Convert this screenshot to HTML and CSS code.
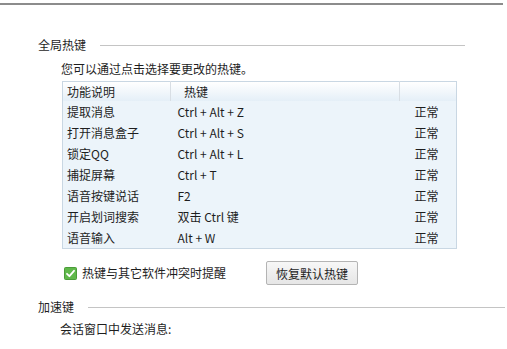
FILE: index.html
```html
<!DOCTYPE html>
<html lang="zh-CN">
<head>
<meta charset="utf-8">
<link rel="stylesheet" href="styles.css">
</head>
<body>
<div class="topline"></div>
<div class="group first">
  <div class="group-title"><span>全局热键</span><i class="rule rule-a"></i></div>
  <p class="hint">您可以通过点击选择要更改的热键。</p>
  <table class="keys">
    <colgroup><col class="w1"><col class="w2"><col class="w3"></colgroup>
    <thead>
      <tr><th class="c1">功能说明</th><th class="c2">热键</th><th class="c3"></th></tr>
    </thead>
    <tbody>
      <tr><td class="c1">提取消息</td><td class="c2">Ctrl + Alt + Z</td><td class="c3">正常</td></tr>
      <tr><td class="c1">打开消息盒子</td><td class="c2">Ctrl + Alt + S</td><td class="c3">正常</td></tr>
      <tr><td class="c1">锁定QQ</td><td class="c2">Ctrl + Alt + L</td><td class="c3">正常</td></tr>
      <tr><td class="c1">捕捉屏幕</td><td class="c2">Ctrl + T</td><td class="c3">正常</td></tr>
      <tr><td class="c1">语音按键说话</td><td class="c2">F2</td><td class="c3">正常</td></tr>
      <tr><td class="c1">开启划词搜索</td><td class="c2">双击 Ctrl 键</td><td class="c3">正常</td></tr>
      <tr><td class="c1">语音输入</td><td class="c2">Alt + W</td><td class="c3">正常</td></tr>
    </tbody>
  </table>
  <div class="options">
    <label class="check">
      <svg width="13" height="13" viewBox="0 0 13 13"><rect x="0.5" y="0.5" width="12" height="12" rx="1" fill="#5fb84a" stroke="#4a9c39"/><path d="M3 6.8 L5.4 9.2 L10 3.8" fill="none" stroke="#fff" stroke-width="1.8" stroke-linecap="round" stroke-linejoin="round"/></svg>
      <span>热键与其它软件冲突时提醒</span>
    </label>
    <button class="btn">恢复默认热键</button>
  </div>
</div>
<div class="group second">
  <div class="group-title"><span>加速键</span><i class="rule rule-b"></i></div>
  <p class="hint hint-b">会话窗口中发送消息:</p>
</div>
</body>
</html>
```
FILE: styles.css
```css
html, body {
  margin: 0;
  padding: 0;
  background: #ffffff;
}
body {
  width: 507px;
  height: 349px;
  overflow: hidden;
  font-family: "Noto Sans CJK SC", "Microsoft YaHei", sans-serif;
  font-size: 12px;
  color: #1e1e1e;
}
.topline {
  margin-top: 3px;
  width: 503px;
  height: 2px;
  background: #8c8c8c;
}
.group-title {
  display: flex;
  align-items: center;
  line-height: 16px;
  height: 16px;
}
.group-title span {
  flex: none;
}
.rule {
  display: block;
  height: 1px;
  background: #c4c4c4;
}
.first .group-title {
  margin-top: 32px;
  padding-left: 38px;
}
.rule-a {
  margin-left: 14px;
  width: 365px;
}
.hint {
  margin: 0;
  padding-left: 61px;
  line-height: 16px;
  margin-top: 8px;
}
.keys {
  margin-top: 4px;
  margin-left: 62px;
  width: 394px;
  border-collapse: collapse;
  table-layout: fixed;
  border: 1px solid #c9d7e3;
  background: #ecf4fa;
}
.w1 { width: 108px; }
.w2 { width: 229px; }
.w3 { width: 57px; }
.keys th, .keys td {
  padding: 0;
  text-align: left;
  font-weight: normal;
  white-space: nowrap;
  overflow: hidden;
}
.keys thead tr {
  height: 19px;
  background: linear-gradient(#ffffff, #e3eef7);
}
.keys th {
  line-height: 19px;
}
.keys th.c2, .keys th.c3 {
  border-left: 1px solid #d8dee4;
}
.keys tbody tr {
  height: 21px;
}
.keys td {
  line-height: 21px;
}
.keys .c1 { padding-left: 4px; }
.keys th.c2 { padding-left: 13px; }
.keys td.c2 { padding-left: 7px; }
.keys td.c3 { padding-left: 15px; }
.options {
  display: flex;
  align-items: center;
  margin-top: 12px;
  padding-left: 64px;
  height: 24px;
}
.check {
  display: flex;
  align-items: center;
  gap: 5px;
  line-height: 16px;
}
.check svg {
  display: block;
  margin-top: 1px;
}
.btn {
  margin-left: 40px;
  width: 92px;
  height: 24px;
  padding: 0;
  font-family: inherit;
  font-size: 12px;
  color: #1e1e1e;
  border: 1px solid #b4b4b4;
  border-radius: 2px;
  background: linear-gradient(#f7f7f7, #e6e6e6);
}
.second .group-title {
  margin-top: 14px;
  padding-left: 38px;
}
.rule-b {
  margin-left: 14px;
  width: 417px;
}
.hint-b {
  padding-left: 60px;
  margin-top: 6px;
}
```
